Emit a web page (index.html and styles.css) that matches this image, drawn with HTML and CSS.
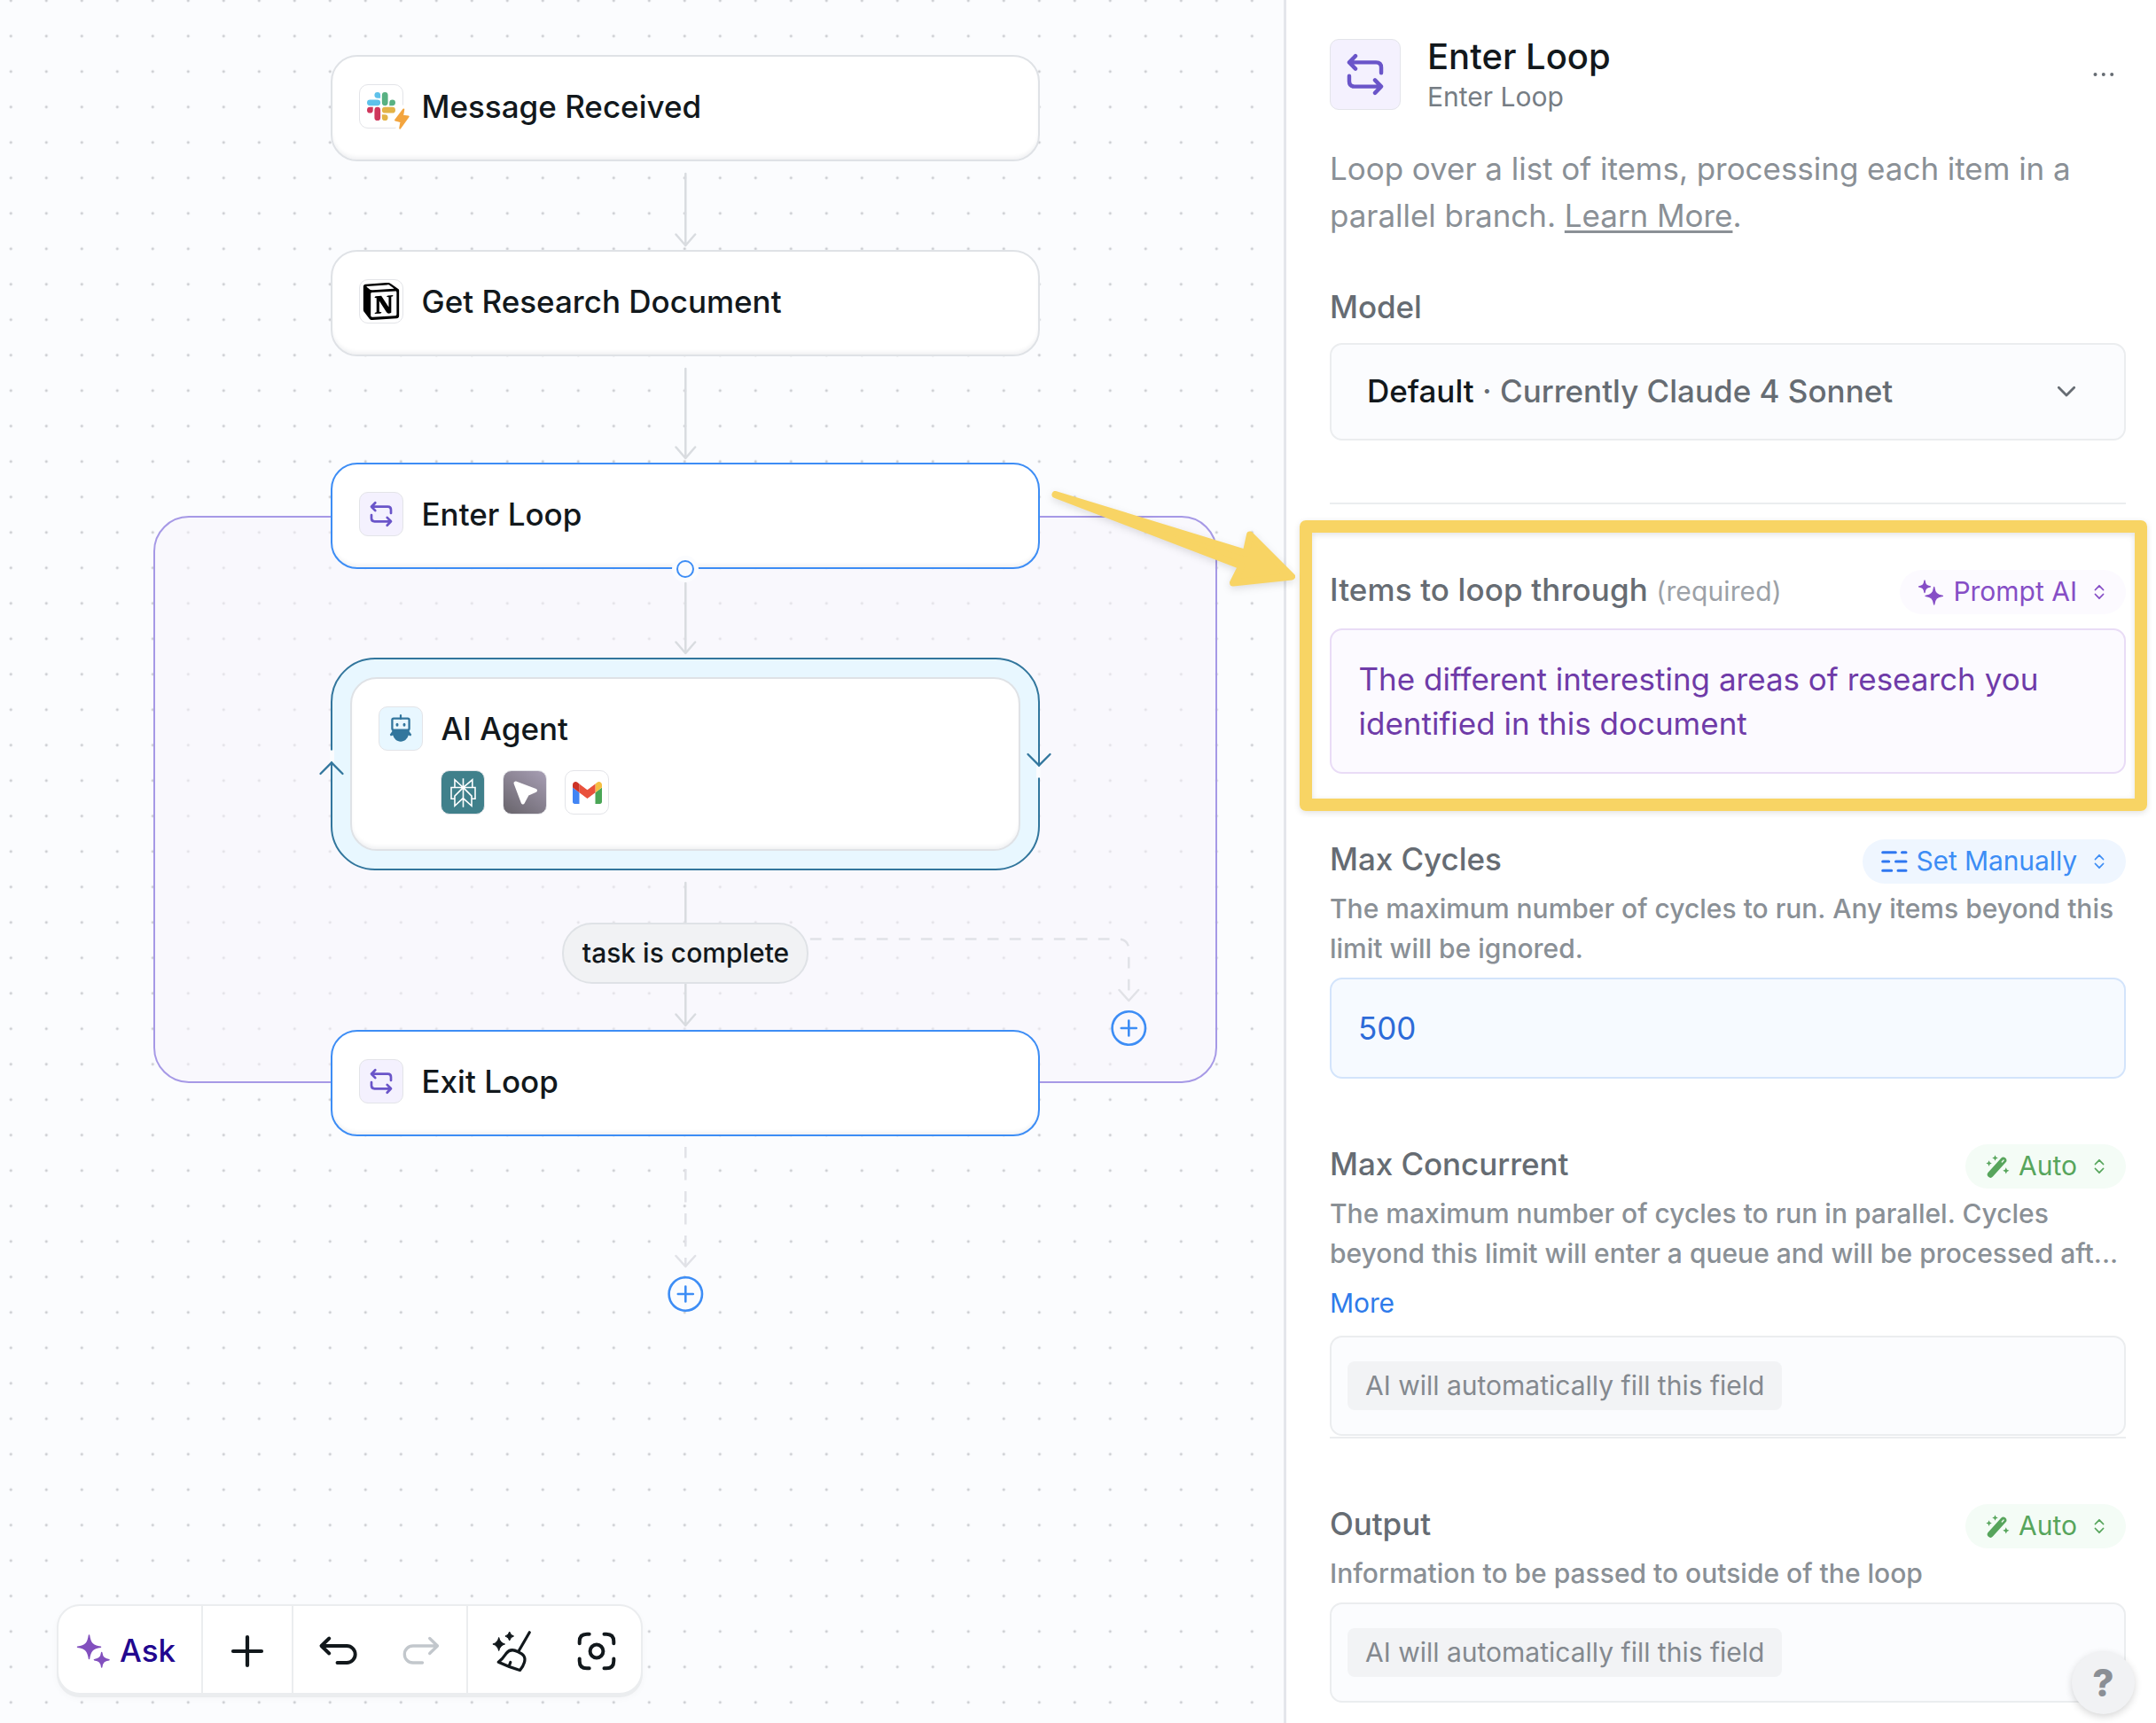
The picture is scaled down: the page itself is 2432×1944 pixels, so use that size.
FILE: index.html
```html
<!DOCTYPE html>
<html lang="en">
<head>
<meta charset="utf-8">
<title>Workflow editor</title>
<link rel="stylesheet" href="styles.css">
</head>
<body>
<svg class="defs" width="0" height="0" aria-hidden="true">
  <symbol id="i-loop" viewBox="0 0 50 50"><path d="M18.300 12.300 14 16.700l4.300 4.400M14 16.700h18.500q3.500 0 3.500 3.500V24M31.700 28.900l4.300 4.400-4.300 4.400M36 33.300H17.500q-3.500 0-3.500-3.500V26" fill="none" stroke="currentColor" stroke-width="2.700" stroke-linecap="round" stroke-linejoin="round"/></symbol>
  <symbol id="i-updown" viewBox="0 0 12 18"><path d="M1.500 6.500 6 1.800l4.500 4.700M1.500 11.500 6 16.200l4.500-4.700" fill="none" stroke="currentColor" stroke-width="1.800" stroke-linecap="round" stroke-linejoin="round"/></symbol>
  <symbol id="i-wand" viewBox="0 0 28 28"><path d="M6.300 23.200 20.800 7.200" stroke="currentColor" stroke-width="7" stroke-linecap="round"/><path d="M19.300 9 21 7.100" stroke="#f4fcf6" stroke-width="1.400" stroke-linecap="round"/><path d="M11.500 1.200l1 2.300 2.300 1-2.300 1-1 2.300-1-2.300-2.300-1 2.300-1zM4.600 7.300l1 2.300 2.300 1-2.300 1-1 2.300-1-2.300-2.300-1 2.300-1zM23.800 15.200l1.100 2.500 2.500 1.100-2.500 1.100-1.100 2.500-1.100-2.500-2.500-1.100 2.500-1.100z" fill="currentColor"/></symbol>
</svg>

<main class="canvas">
  <div class="loop-region"></div>

  <svg class="edges" width="1448" height="1944" viewBox="0 0 1448 1944">
    <g class="edge">
      <path d="M773.300 196V277M762.500 264.500l10.800 12.500 10.800-12.500"/>
      <path d="M773.300 416V517M762.500 504.500l10.800 12.500 10.800-12.500"/>
      <path d="M773.300 658V737M762.500 724.500l10.800 12.500 10.800-12.500"/>
      <path d="M773.300 996V1157M762.500 1144.500l10.800 12.500 10.800-12.500"/>
    </g>
    <g class="edge edge-dashed">
      <path d="M913.800 1059.500H1261q12.300 0 12.300 12.300V1129" stroke-dasharray="12.700 12.300"/>
      <path class="solid" d="M1262.500 1117l10.800 12 10.800-12"/>
      <path d="M773.300 1294V1429" stroke-dasharray="12.500 12.500"/>
      <path class="solid" d="M762.500 1417l10.800 12 10.800-12"/>
    </g>
    <g class="add">
      <circle cx="1273.300" cy="1160" r="18.700"/><path d="M1264.800 1160h17M1273.300 1151.500v17"/>
      <circle cx="773.300" cy="1460" r="18.700"/><path d="M764.800 1460h17M773.300 1451.500v17"/>
    </g>
  </svg>

  <section class="node n-message">
    <span class="tile">
      <svg width="32" height="32" viewBox="0 0 24 24"><path fill="#5ec1ea" d="M8.834 5.042a2.528 2.528 0 0 1-2.521-2.520A2.528 2.528 0 0 1 8.834 0a2.528 2.528 0 0 1 2.521 2.522v2.520H8.834zm0 1.271a2.528 2.528 0 0 1 2.521 2.521 2.528 2.528 0 0 1-2.521 2.521H2.522A2.528 2.528 0 0 1 0 8.834a2.528 2.528 0 0 1 2.522-2.521h6.312z"/><path fill="#cf375c" d="M5.042 15.165a2.528 2.528 0 0 1-2.520 2.523A2.528 2.528 0 0 1 0 15.165a2.527 2.527 0 0 1 2.522-2.520h2.520v2.520zM6.313 15.165a2.527 2.527 0 0 1 2.521-2.520 2.527 2.527 0 0 1 2.521 2.520v6.313A2.528 2.528 0 0 1 8.834 24a2.528 2.528 0 0 1-2.521-2.522v-6.313z"/><path fill="#58b182" d="M18.956 8.834a2.528 2.528 0 0 1 2.522-2.521A2.528 2.528 0 0 1 24 8.834a2.528 2.528 0 0 1-2.522 2.521h-2.522V8.834zM17.688 8.834a2.528 2.528 0 0 1-2.523 2.521 2.527 2.527 0 0 1-2.520-2.521V2.522A2.527 2.527 0 0 1 15.165 0a2.528 2.528 0 0 1 2.523 2.522v6.312z"/><path fill="#e3b347" d="M15.165 18.956a2.528 2.528 0 0 1 2.523 2.522A2.528 2.528 0 0 1 15.165 24a2.527 2.527 0 0 1-2.520-2.522v-2.522h2.520zM15.165 17.688a2.527 2.527 0 0 1-2.520-2.523 2.526 2.526 0 0 1 2.520-2.520h6.313A2.527 2.527 0 0 1 24 15.165a2.528 2.528 0 0 1-2.522 2.523h-6.313z"/></svg>
      <svg class="bolt" width="28" height="32" viewBox="0 0 28 32"><path d="M15 5 6 17.500l5.800 1.700-.8 7.300 9.500-13.200-6-1.300z" fill="#fff" stroke="#fff" stroke-width="9" stroke-linejoin="round"/><path d="M15.300 5.400 6 17.500l6.500 1.700-1.300 7.500 9.500-13.200-6.600-.8z" fill="#f3a53f" stroke="#f3a53f" stroke-width="2" stroke-linejoin="round"/></svg>
    </span>
    <h3>Message Received</h3>
  </section>

  <section class="node n-document">
    <span class="tile">
      <svg width="42" height="42" viewBox="0 0 24 24"><path fill-rule="evenodd" d="M4.459 4.208c.746.606 1.026.56 2.428.466l13.215-.793c.28 0 .047-.28-.046-.326L17.860 1.968c-.42-.326-.981-.7-2.055-.607L3.010 2.295c-.466.046-.56.28-.374.466zm.793 3.080v13.904c0 .747.373 1.027 1.214.98l14.523-.84c.841-.046.935-.56.935-1.167V6.354c0-.606-.233-.933-.748-.887l-15.177.887c-.56.047-.747.327-.747.933zm14.337.745c.093.42 0 .84-.42.888l-.7.14v10.264c-.608.327-1.168.514-1.635.514-.748 0-.935-.234-1.495-.933l-4.577-7.186v6.952L12.210 19s0 .84-1.168.84l-3.222.186c-.093-.186 0-.653.327-.746l.84-.233V9.854L7.822 9.760c-.094-.42.14-1.026.793-1.073l3.456-.233 4.764 7.279v-6.440l-1.215-.139c-.093-.514.28-.887.747-.933zM1.936 1.035l13.310-.98c1.634-.14 2.055-.047 3.082.7l4.249 2.986c.7.513.934.653.934 1.213v16.378c0 1.026-.373 1.634-1.680 1.726l-15.458.934c-.98.047-1.448-.093-1.962-.747l-3.129-4.060c-.56-.747-.793-1.306-.793-1.960V2.667c0-.839.374-1.540 1.447-1.632z"/></svg>
    </span>
    <h3>Get Research Document</h3>
  </section>

  <section class="node n-enter selected">
    <span class="tile tile-loop"><svg width="50" height="50"><use href="#i-loop"/></svg></span>
    <h3>Enter Loop</h3>
    <span class="handle"></span>
  </section>

  <section class="agent">
    <div class="agent-card">
      <div class="agent-head">
        <span class="tile tile-agent"><svg width="50" height="50" viewBox="0 0 50 50"><path d="M25 10v4" stroke="#32769d" stroke-width="2.200" stroke-linecap="round"/><rect x="15.400" y="13.700" width="19.200" height="13" rx="1.600" fill="none" stroke="#32769d" stroke-width="2.300"/><ellipse cx="21" cy="20.800" rx="1.500" ry="2" fill="#32769d"/><ellipse cx="29" cy="20.800" rx="1.500" ry="2" fill="#32769d"/><path d="M15.300 26h19.400v2.200l2.500 3.500-1 1.700-2.400-.8C32.200 36.800 29.500 39.700 25 39.700s-7.200-2.900-8.800-7.100l-2.400.8-1-1.700 2.500-3.500z" fill="#32769d"/></svg></span>
        <h3>AI Agent</h3>
      </div>
      <div class="tools">
        <span class="tile tile-perplexity"><svg width="33" height="33" viewBox="0 0 24 24"><path fill="#fff" d="M22.398 7.090h-2.311V.068l-7.509 6.354V.158h-1.156v6.196L4.490 0v7.090H1.602v10.397h2.888V24l6.932-6.359v6.200h1.156v-6.047l6.932 6.181v-6.488h2.888V7.090zm-3.466-4.531v4.531h-5.355l5.355-4.531zm-13.286.067 4.869 4.464H5.646V2.626zM2.758 16.332V8.245h7.847L4.490 14.360v1.972H2.758zm2.888 5.040v-3.885v-2.649l5.776-5.776v7.011l-5.776 5.299zm12.708.025-5.776-5.151V9.062l5.776 5.776v6.559zm2.889-5.065h-1.733v-1.972L13.395 8.245h7.848v8.087z"/></svg></span>
        <span class="tile tile-cursor"><svg width="50" height="50" viewBox="0 0 50 50"><path d="M14.500 14.500 37 22.800 28 26.800 22.800 36.500z" fill="#fff" stroke="#fff" stroke-width="4" stroke-linejoin="round"/></svg></span>
        <span class="tile"><svg width="33" height="25" viewBox="52 42 88 66"><path fill="#4285f4" d="M58 108h14V74L52 59v43c0 3.320 2.690 6 6 6"/><path fill="#4aa656" d="M120 108h14c3.320 0 6-2.690 6-6V59l-20 15"/><path fill="#f5be42" d="M120 48v26l20-15v-8c0-7.420-8.470-11.650-14.400-7.200"/><path fill="#e9513c" d="M72 74V48l24 18 24-18v26L96 92"/><path fill="#cc3327" d="M52 51v8l20 15V48l-5.600-4.200c-5.940-4.450-14.400-.22-14.400 7.200"/></svg></span>
      </div>
    </div>
    <svg class="cycle cycle-up" width="30" height="32" viewBox="0 0 30 32"><path d="M13 1.500h5v13h-5z" fill="#fbfcfe"/><path d="M2.500 28 15 15.500 27.500 28" fill="none" stroke="#32769d" stroke-width="2.300" stroke-linecap="round"/></svg>
    <svg class="cycle cycle-down" width="30" height="32" viewBox="0 0 30 32"><path d="M12 17.500h5v13h-5z" fill="#fbfcfe"/><path d="M2.500 4 15 16.500 27.500 4" fill="none" stroke="#32769d" stroke-width="2.300" stroke-linecap="round"/></svg>
  </section>

  <div class="condition">task is complete</div>

  <section class="node n-exit selected">
    <span class="tile tile-loop"><svg width="50" height="50"><use href="#i-loop"/></svg></span>
    <h3>Exit Loop</h3>
  </section>

  <nav class="toolbar">
    <div class="group g-ask">
      <svg width="38" height="40" viewBox="0 0 38 40"><path d="M14.500 2C15.800 11 18.500 14 27.500 15.200 18.500 16.400 15.800 19.400 14.500 28.400 13.200 19.400 10.500 16.400 1.500 15.200 10.500 14 13.200 11 14.500 2zM28.700 21.500C29.400 27 31.500 29 37 29.700 31.500 30.400 29.400 32.400 28.700 37.900 28 32.400 25.900 30.400 20.400 29.700 25.900 29 28 27 28.700 21.500z" fill="#8250be" stroke="#8250be" stroke-width="1.500" stroke-linejoin="round"/></svg>
      <span class="ask">Ask</span>
    </div>
    <div class="group g-add"><svg width="40" height="40" viewBox="0 0 40 40"><path d="M20 4v32M4 20h32" stroke="#12181c" stroke-width="4.200" stroke-linecap="round"/></svg></div>
    <div class="group g-history">
      <svg width="46" height="40" viewBox="0 0 46 40"><path d="M13.300 5.500 4.500 14l8.800 8.500M4.500 14H33.200a9.500 9.500 0 0 1 0 19H22.500" fill="none" stroke="#12181c" stroke-width="3.900" stroke-linecap="round" stroke-linejoin="round"/></svg>
      <svg width="46" height="40" viewBox="0 0 46 40"><path d="M32.700 5.500 41.500 14l-8.800 8.500M41.500 14H13.800a9.500 9.500 0 0 0 0 19H24.500" fill="none" stroke="#c2c7cc" stroke-width="3.300" stroke-linecap="round" stroke-linejoin="round"/></svg>
    </div>
    <div class="group g-view">
      <svg width="46" height="50" viewBox="0 0 46 50"><g fill="none" stroke="#12181c" stroke-width="3.200" stroke-linecap="round" stroke-linejoin="round"><path d="M42.300 3.800 30 25M7.200 37.300C12 34 14 30.500 16 27.500 19.500 23 24 22.800 29 25.500 36.500 29 38 32 36.500 37.500 35.600 41 33.500 44 31.500 46.500Q18 42.500 7.200 37.300zM20.800 37.500 19.300 41.500"/></g><path d="M7.700 9.500Q9 15.500 14.500 17 9 18.500 7.700 24.500 6.400 18.500.9 17 6.400 15.500 7.700 9.500zM19.700 3Q20.700 7 24.500 8 20.700 9 19.700 13 18.700 9 14.900 8 18.700 7 19.700 3z" fill="#12181c" stroke="#12181c" stroke-width="1" stroke-linejoin="round"/></svg>
      <svg width="46" height="46" viewBox="0 0 46 46"><g fill="none" stroke="#12181c" stroke-width="4" stroke-linecap="round"><path d="M3.700 14.300V12q0-8.300 8.300-8.300h2.700M31.500 3.700H34q8.300 0 8.300 8.300v2.300M42.300 31.500V34q0 8.300-8.300 8.300h-2.500M14.700 42.300H12q-8.300 0-8.300-8.300v-2.500"/><circle cx="23" cy="23" r="7.400"/></g></svg>
    </div>
  </nav>
</main>

<aside class="panel">
  <header class="panel-head">
    <span class="tile-big"><svg width="82" height="82"><use href="#i-loop"/></svg></span>
    <div class="titles"><h1>Enter Loop</h1><p>Enter Loop</p></div>
    <svg class="more-dots" width="24" height="6" viewBox="0 0 24 6"><circle cx="2.500" cy="3" r="2"/><circle cx="11.800" cy="3" r="2"/><circle cx="21.200" cy="3" r="2"/></svg>
  </header>
  <p class="intro">Loop over a list of items, processing each item in a<br>parallel branch. <u>Learn More</u>.</p>
  <h2 class="label model-label">Model</h2>
  <div class="select"><span><b>Default</b> <i>· Currently Claude 4 Sonnet</i></span><svg width="24" height="16" viewBox="0 0 24 16"><path d="M3.300 3.200 12 12l8.700-8.800" fill="none" stroke="#666c73" stroke-width="2.800" stroke-linecap="round" stroke-linejoin="round"/></svg></div>
  <hr>

  <div class="row">
    <h2 class="label label-items">Items to loop through <small>(required)</small></h2>
    <span class="mode mode-ai"><svg width="30" height="30" viewBox="0 0 30 30"><path d="M8 2C8.600 6.500 10 8.100 14.500 8.800 10 9.500 8.600 11 8 15.500 7.400 11 6 9.500 1.500 8.800 6 8.100 7.400 6.500 8 2zM18.700 9.500C19.600 16 21.700 18.300 28.400 19.300 21.700 20.300 19.600 22.500 18.700 29 17.800 22.500 15.700 20.300 9 19.300 15.700 18.300 17.800 16 18.700 9.500z" fill="currentColor" stroke="currentColor" stroke-width="1.300" stroke-linejoin="round"/></svg><span>Prompt AI</span><svg width="12" height="18"><use href="#i-updown"/></svg></span>
  </div>
  <div class="field field-ai">The different interesting areas of research you<br>identified in this document</div>

  <div class="row">
    <h2 class="label">Max Cycles</h2>
    <span class="mode mode-manual"><svg width="32" height="26" viewBox="0 0 32 26"><path d="M2.700 2.700h14.600M24.500 2.700h4.500M2.700 13h7M17.500 13h11.500M2.700 23.300h10M20 23.300h9" stroke="#2f77f1" stroke-width="3" stroke-linecap="round"/></svg><span>Set Manually</span><svg width="12" height="18"><use href="#i-updown"/></svg></span>
  </div>
  <p class="help">The maximum number of cycles to run. Any items beyond this<br>limit will be ignored.</p>
  <div class="field field-manual">500</div>

  <div class="row">
    <h2 class="label">Max Concurrent</h2>
    <span class="mode mode-auto"><svg width="28" height="28"><use href="#i-wand"/></svg><span>Auto</span><svg width="12" height="18"><use href="#i-updown"/></svg></span>
  </div>
  <p class="help">The maximum number of cycles to run in parallel. Cycles<br>beyond this limit will enter a queue and will be processed aft...</p>
  <a class="more">More</a>
  <div class="field field-auto"><span class="chip">AI will automatically fill this field</span></div>
  <hr class="tight">

  <div class="row">
    <h2 class="label">Output</h2>
    <span class="mode mode-auto"><svg width="28" height="28"><use href="#i-wand"/></svg><span>Auto</span><svg width="12" height="18"><use href="#i-updown"/></svg></span>
  </div>
  <p class="help">Information to be passed to outside of the loop</p>
  <div class="field field-auto"><span class="chip">AI will automatically fill this field</span></div>
</aside>

<div class="callout"></div>
<svg class="callout-arrow" width="300" height="130" viewBox="1175 545 300 130"><path d="M1190.500 558 1405.500 624 1410 603.500 1457 650.500 1391 657.500 1400.500 638.500z" fill="#f8d464" stroke="#f8d464" stroke-width="8" stroke-linejoin="round"/></svg>
<button class="help-button">?</button>
</body>
</html>
```
FILE: styles.css
```css
* { box-sizing: border-box; }
body {
  margin: 0;
  width: 2432px;
  height: 1944px;
  overflow: hidden;
  position: relative;
  display: flex;
  font-family: Inter, "Liberation Sans", sans-serif;
  color: #12181c;
  background: #fff;
}
h1, h2, h3, p { margin: 0; }
svg { display: block; flex: none; }
.defs { position: absolute; }

/* canvas */
.canvas {
  position: relative;
  flex: none;
  width: 1448px;
  height: 1944px;
  background-color: #fbfcfe;
  background-image: radial-gradient(circle at 20px 20px, #c9cbcf 0.900px, rgba(201, 203, 207, 0) 2px);
  background-size: 40px 40px;
  background-position: -7.700px -19.300px;
}
.loop-region {
  position: absolute;
  left: 173px;
  top: 582px;
  width: 1200px;
  height: 640px;
  border: 2px solid #a699e6;
  border-radius: 40px;
  background: rgba(247, 244, 252, 0.550);
}
.edges { position: absolute; left: 0; top: 0; }
.edge { fill: none; stroke: #d9dce0; stroke-width: 2.500; stroke-linecap: round; stroke-linejoin: round; }
.edge-dashed { stroke: #e1e2e7; stroke-linecap: butt; }
.solid { stroke-linecap: round; }
.add { fill: none; stroke: #3d8df5; stroke-width: 2.600; stroke-linecap: round; }
.node {
  position: absolute;
  left: 373px;
  width: 800px;
  height: 120px;
  display: flex;
  align-items: center;
  padding: 0 30px 4px;
  border: 2px solid #dfe2e6;
  border-radius: 30px;
  background: #fff;
  box-shadow: inset 0 -4px 5px -2px rgba(30, 40, 60, 0.080);
}
.node.selected { border-color: #3d8df5; }
.n-message { top: 62px; }
.n-document { top: 282px; }
.n-enter { top: 522px; }
.n-exit { top: 1162px; }
h3 { margin-left: 20.500px; font-size: 35px; line-height: 48px; font-weight: 500; white-space: nowrap; }
.tile {
  position: relative;
  flex: none;
  width: 50px;
  height: 50px;
  display: grid;
  place-items: center;
  border: 1px solid #e3e4e8;
  border-radius: 10px;
  background: #fff;
}
.tile-loop { background: #f4f1fe; color: #6a55c9; }
.tile-loop svg, .tile-agent svg, .tile-cursor svg { margin: -1px; }
.tile-agent { background: #e8f7ff; }
.tile-perplexity { background: #40808b; }
.tile-cursor { background: linear-gradient(35deg, #68646b, #a79eb4); }
.bolt { position: absolute; left: 34px; top: 22px; }
.handle {
  position: absolute;
  left: 383px;
  top: 103px;
  width: 30px;
  height: 30px;
  border-radius: 50%;
  background: #fbfcfe;
}
.handle::after {
  content: "";
  position: absolute;
  inset: 5px;
  border: 2px solid #3d8df5;
  border-radius: 50%;
}
.agent {
  position: absolute;
  left: 373px;
  top: 742px;
  width: 800px;
  height: 240px;
  padding: 20px;
  border: 2px solid #32769d;
  border-radius: 50px;
  background: #e8f7ff;
}
.agent-card {
  height: 196px;
  padding: 31px 30px;
  border: 2px solid #dfe2e6;
  border-radius: 30px;
  background: #fff;
  box-shadow: inset 0 -4px 5px -2px rgba(30, 40, 60, 0.080);
}
.agent-head { display: flex; align-items: center; }
.tools { display: flex; gap: 20px; margin: 22px 0 0 70px; }
.cycle { position: absolute; }
.cycle-up { left: -16px; top: 101px; }
.cycle-down { right: -16px; top: 103px; }
.condition {
  position: absolute;
  left: 634px;
  top: 1041px;
  width: 278px;
  height: 69px;
  border: 2px solid #dfe2e6;
  border-radius: 34px;
  background: #f1f2f4;
  font-size: 30px;
  line-height: 65px;
  font-weight: 500;
  text-align: center;
  text-indent: 1px;
}
.toolbar {
  position: absolute;
  left: 64px;
  top: 1810px;
  width: 661px;
  height: 102px;
  display: flex;
  border: 2px solid #ebedef;
  border-radius: 26px;
  background: #fff;
  box-shadow: 0 3px 0 #ebedef, 0 4px 8px rgba(0, 0, 0, 0.030);
}
.group { display: flex; align-items: center; padding-top: 4px; border-right: 2px solid #ebedef; }
.g-ask { width: 163px; padding-left: 20px; }
.ask { margin: -2px 0 0 11px; font-size: 35px; font-weight: 500; color: #22078f; }
.g-add { width: 102px; justify-content: center; }
.g-history { width: 197px; padding-left: 27px; gap: 48px; }
.g-view { border: 0; padding-left: 27px; gap: 49px; }

/* settings panel */
.panel {
  flex: 1;
  height: 1944px;
  padding: 44px 34px 0 49px;
  border-left: 3px solid #e4e6eb;
  background: #fff;
}
.panel-head { display: flex; align-items: center; height: 80px; }
.tile-big {
  width: 80px;
  height: 80px;
  display: grid;
  place-items: center;
  border: 1px solid #e3e4ea;
  border-radius: 10px;
  background: #f4f1fe;
  color: #6a55c9;
}
.tile-big svg { margin: -2px; }
.titles { margin-left: 30px; padding-top: 2px; }
h1 { margin-bottom: 2px; font-size: 40px; line-height: 45px; font-weight: 500; }
.titles p { font-size: 30px; line-height: 42px; color: #767d84; }
.more-dots { margin: 0 13px 0 auto; fill: #666c73; }
.intro { margin-top: 40px; font-size: 35px; line-height: 53px; letter-spacing: -0.040px; color: #8a9096; white-space: nowrap; }
.intro u { text-decoration-thickness: 2.500px; text-underline-offset: 4px; }
.label { font-size: 35px; line-height: 46px; letter-spacing: -0.060px; font-weight: 500; color: #666c73; white-space: nowrap; }
.label-items { letter-spacing: 0.120px; }
.label small { font-size: 30px; font-weight: 400; color: #9ca1a7; }
.model-label { margin: 53px 0 18px; }
.select {
  display: flex;
  align-items: center;
  justify-content: space-between;
  height: 110px;
  padding: 0 53px 0 40px;
  border: 2px solid #ebedef;
  border-radius: 14px;
  background: #fbfcfe;
  font-size: 35px;
  font-weight: 500;
  color: #12181c;
}
.select span { padding-bottom: 2px; }
.select b, .select i { font-weight: 500; font-style: normal; }
.select i { color: #666c73; }
hr { height: 2px; margin: 70px 0 0; border: 0; background: #ebedef; }
hr.tight { margin-top: 1px; }
.row { display: flex; justify-content: space-between; height: 50px; margin-top: 74px; }
.row .label { margin-top: -1px; }
.mode {
  display: flex;
  align-items: center;
  height: 50px;
  padding: 0 24px 0 20px;
  border-radius: 25px;
  font-size: 30px;
}
.mode span { margin: 0 19px 2px 10px; }
.mode-ai { color: #864ec6; background: #fcfaff; }
.mode-manual { letter-spacing: -0.100px; color: #3d8df5; background: #eff6ff; }
.mode-manual span { margin-left: 8px; }
.mode-auto { padding-left: 22px; color: #57a55c; background: #f4fcf6; }
.field { border: 2px solid #ebedef; border-radius: 14px; background: #fbfcfe; white-space: nowrap; }
.field-ai {
  height: 164px;
  margin-top: 16px;
  padding: 30px 30.500px;
  border-color: #e9dcf6;
  background: #fcfaff;
  font-size: 35px;
  line-height: 50px;
  color: #6f3ba8;
}
.help { margin-top: 6px; font-size: 30px; line-height: 45px; font-weight: 500; color: #8a9096; white-space: nowrap; }
.field-manual {
  height: 114px;
  margin-top: 10px;
  padding: 0 30px;
  border-color: #d3e4fb;
  background: #f6faff;
  font-size: 35px;
  line-height: 111px;
  color: #2d6bd8;
}
.more { display: block; margin: 11px 0 14px; font-size: 30px; line-height: 45px; letter-spacing: -0.100px; color: #2f7bea; }
.field-auto { height: 113px; margin-top: 10px; padding: 27px 18px; }
.chip {
  display: inline-block;
  height: 55px;
  padding: 0 20px;
  border-radius: 8px;
  background: #f2f3f5;
  font-size: 30px;
  line-height: 54px;
  color: #84898f;
}

/* annotations */
.callout {
  position: absolute;
  left: 1466px;
  top: 587px;
  width: 956px;
  height: 328px;
  border-radius: 7px;
  border: 14px solid #f8d464;
  box-shadow: 0 2px 7px rgba(0, 0, 0, 0.120), inset 0 2px 7px rgba(0, 0, 0, 0.120);
}
.callout-arrow { position: absolute; left: 1175px; top: 545px; filter: drop-shadow(0 3px 4px rgba(0, 0, 0, 0.120)); }
.help-button {
  position: absolute;
  left: 2337px;
  top: 1863px;
  width: 71px;
  height: 71px;
  padding: 0;
  border: 0;
  border-radius: 50%;
  background: #f1f2f4;
  font: 800 42px Inter, sans-serif;
  color: #8b8f95;
  box-shadow: 0 3px 8px rgba(0, 0, 0, 0.160);
}
```
